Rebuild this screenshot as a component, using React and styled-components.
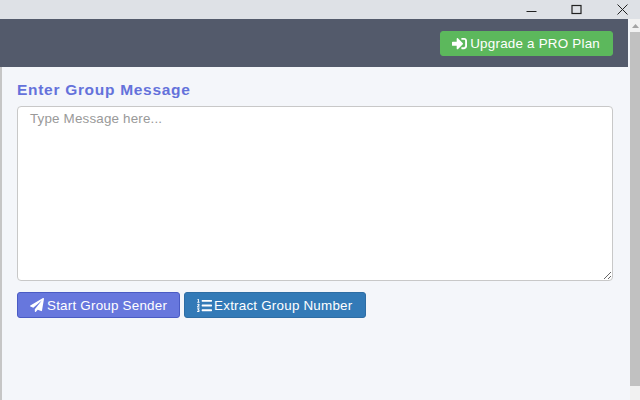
import styled, { createGlobalStyle } from "styled-components";
import { FaSignInAlt, FaPaperPlane, FaListOl } from "react-icons/fa";

const GlobalStyle = createGlobalStyle`
  html, body {
    margin: 0;
    padding: 0;
    height: 100%;
    overflow: hidden;
    font-family: "Liberation Sans", Arial, sans-serif;
  }
  * {
    box-sizing: border-box;
  }
`;

const Page = styled.div`
  width: 640px;
  height: 400px;
  display: flex;
  flex-direction: column;
  background: #f4f6fa;
`;

const TitleBar = styled.div`
  height: 19px;
  flex: none;
  display: flex;
  justify-content: flex-end;
  gap: 9.5px;
  background: #dee1e6;
`;

const WindowButton = styled.div`
  width: 36px;
  height: 19px;
  display: flex;
  align-items: center;
  justify-content: center;
  color: #222;
`;

const Body = styled.div`
  flex: 1;
  display: flex;
  min-height: 0;
`;

const Main = styled.div`
  flex: 1;
  display: flex;
  flex-direction: column;
  padding-right: 2px;
`;

const Header = styled.header`
  height: 48px;
  flex: none;
  display: flex;
  align-items: center;
  justify-content: flex-end;
  padding: 1px 15px 0 0;
  background: #535a6b;
`;

const Button = styled.button`
  display: inline-flex;
  align-items: center;
  gap: ${(p) => p.$gap ?? 3}px;
  height: ${(p) => p.$height || 26}px;
  padding: ${(p) => p.$padding || "0 12px"};
  border: 1px solid ${(p) => p.$border};
  border-radius: 3px;
  background: ${(p) => p.$bg};
  color: #fff;
  font-family: inherit;
  font-size: 13.4px;
  letter-spacing: 0.22px;
  white-space: nowrap;

  svg {
    font-size: ${(p) => p.$iconSize || 14}px;
    flex: none;
  }
`;

const Content = styled.main`
  flex: 1;
  padding: 14px 15px 0;
  border-left: 2px solid #c6c6c6;
`;

const Title = styled.h2`
  margin: 0 0 8px;
  font-size: 15.5px;
  line-height: 17px;
  font-weight: bold;
  letter-spacing: 0.7px;
  color: #6472db;
`;

const MessageBox = styled.textarea`
  display: block;
  width: 100%;
  height: 175px;
  padding: 4px 12px;
  border: 1px solid #c8c8c8;
  border-radius: 4px;
  background: #fff;
  font-family: inherit;
  font-size: 13.4px;
  letter-spacing: 0.17px;
  line-height: 15px;
  outline: none;

  &::placeholder {
    color: #999;
    opacity: 1;
  }
`;

const Actions = styled.div`
  display: flex;
  gap: 4px;
  margin-top: 11px;
`;

const ScrollBar = styled.div`
  width: 10px;
  flex: none;
  display: flex;
  flex-direction: column;
  background: #f1f1f1;
`;

const ScrollArrow = styled.div`
  height: 13px;
  flex: none;
  display: flex;
  align-items: center;
  justify-content: center;
`;

const ScrollThumb = styled.div`
  height: 354px;
  flex: none;
  background: #c1c1c1;
`;

const Caret = styled.svg`
  display: block;
`;

export default function App() {
  return (
    <Page>
      <GlobalStyle />
      <TitleBar>
        <WindowButton>
          <svg width="11" height="11" viewBox="0 0 11 11">
            <path d="M0.5 7.5h10" stroke="currentColor" fill="none" />
          </svg>
        </WindowButton>
        <WindowButton>
          <svg width="11" height="11" viewBox="0 0 11 11">
            <rect x="1" y="1.5" width="9" height="8" stroke="currentColor" strokeWidth="1.2" fill="none" />
          </svg>
        </WindowButton>
        <WindowButton>
          <svg width="11" height="11" viewBox="0 0 11 11">
            <path d="M0.5 0.5l10 10M10.5 0.5l-10 10" stroke="currentColor" fill="none" />
          </svg>
        </WindowButton>
      </TitleBar>
      <Body>
        <Main>
          <Header>
            <Button $bg="#5cb85c" $border="#5cb85c" $height={25} $iconSize={15} $padding="0 12px 0 11px">
              <FaSignInAlt />
              Upgrade a PRO Plan
            </Button>
          </Header>
          <Content>
            <Title>Enter Group Message</Title>
            <MessageBox placeholder="Type Message here..." />
            <Actions>
              <Button $bg="#6777dd" $border="#4a5bc4">
                <FaPaperPlane />
                Start Group Sender
              </Button>
              <Button $bg="#337ab7" $border="#2e6da4" $iconSize={15} $gap={2} $padding="0 13px 0 12px">
                <FaListOl />
                Extract Group Number
              </Button>
            </Actions>
          </Content>
        </Main>
        <ScrollBar>
          <ScrollArrow>
            <Caret width="7" height="4" viewBox="0 0 7 4">
              <path d="M0 4L3.5 0L7 4Z" fill="#a3a3a3" />
            </Caret>
          </ScrollArrow>
          <ScrollThumb />
        </ScrollBar>
      </Body>
    </Page>
  );
}
